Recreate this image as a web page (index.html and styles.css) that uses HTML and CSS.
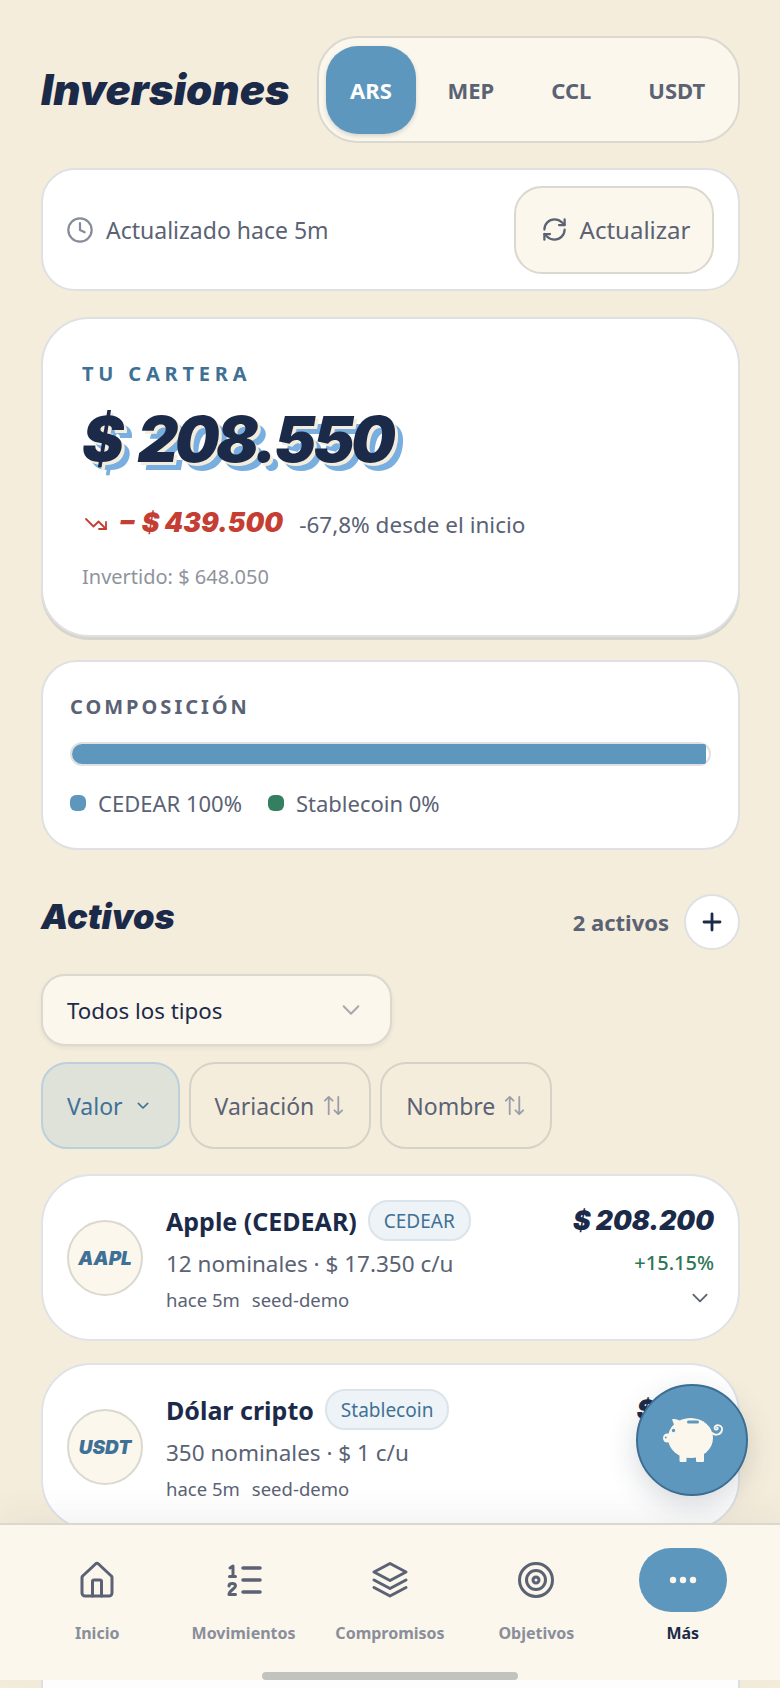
FILE: index.html
```html
<!DOCTYPE html>
<html lang="es">
<head>
<meta charset="utf-8">
<title>Inversiones</title>
<link rel="stylesheet" href="styles.css">
</head>
<body>
<div class="page">
  <main class="content">
    <header class="top">
      <h1 class="title">Inversiones</h1>
      <div class="seg">
        <button class="seg-item active">ARS</button>
        <button class="seg-item">MEP</button>
        <button class="seg-item">CCL</button>
        <button class="seg-item">USDT</button>
      </div>
    </header>

    <section class="card status">
      <div class="updated">
        <svg class="ic-clock" viewBox="0 0 24 24"><circle cx="12" cy="12" r="10"/><path d="M12 6v6l4 2"/></svg>
        <span>Actualizado hace 5m</span>
      </div>
      <button class="refresh">
        <svg class="ic-refresh" viewBox="0 0 24 24"><path d="M3 12a9 9 0 0 1 9-9 9.75 9.75 0 0 1 6.74 2.74L21 8"/><path d="M21 3v5h-5"/><path d="M21 12a9 9 0 0 1-9 9 9.75 9.75 0 0 1-6.74-2.74L3 16"/><path d="M8 16H3v5"/></svg>
        <span>Actualizar</span>
      </button>
    </section>

    <section class="card hero">
      <div class="eyebrow">TU CARTERA</div>
      <div class="amount">$ 208.550</div>
      <div class="change">
        <svg class="ic-down" viewBox="0 0 24 24"><path d="M22 19l-7.5-7.5-5 5L2 9"/><path d="M22 12v7h-7"/></svg>
        <span class="loss">− $ 439.500</span>
        <span class="pct">-67,8% desde el inicio</span>
      </div>
      <div class="invested">Invertido: $ 648.050</div>
    </section>

    <section class="card comp">
      <div class="comp-title">COMPOSICIÓN</div>
      <div class="bar"><div class="bar-fill"></div></div>
      <div class="legend">
        <span class="leg"><i class="dot blue"></i>CEDEAR 100%</span>
        <span class="leg"><i class="dot green"></i>Stablecoin 0%</span>
      </div>
    </section>

    <div class="assets-head">
      <h2 class="subtitle">Activos</h2>
      <div class="assets-right">
        <span class="count">2 activos</span>
        <button class="plus"><svg viewBox="0 0 24 24"><path d="M12 4v16M4 12h16"/></svg></button>
      </div>
    </div>

    <div class="select">
      <span>Todos los tipos</span>
      <svg class="ic-chev" viewBox="0 0 24 24"><path d="M4 8l8 8 8-8"/></svg>
    </div>

    <div class="sorts">
      <button class="sort on">Valor <svg class="ic-small" viewBox="0 0 24 24"><path d="M5 8l7 7 7-7"/></svg></button>
      <button class="sort">Variación <svg class="ic-updown" viewBox="0 0 24 24"><path d="M7 21V3M3 7l4-4 4 4"/><path d="M17 3v18M13 17l4 4 4-4"/></svg></button>
      <button class="sort">Nombre <svg class="ic-updown" viewBox="0 0 24 24"><path d="M7 21V3M3 7l4-4 4 4"/><path d="M17 3v18M13 17l4 4 4-4"/></svg></button>
    </div>

    <article class="card asset">
      <div class="avatar">AAPL</div>
      <div class="info">
        <div class="name-row"><span class="name">Apple (CEDEAR)</span><span class="chip">CEDEAR</span></div>
        <div class="sub">12 nominales · $ 17.350 c/u</div>
        <div class="meta"><span>hace 5m</span><span>seed-demo</span></div>
      </div>
      <div class="nums">
        <div class="value">$ 208.200</div>
        <div class="gain">+15.15%</div>
        <svg class="ic-expand" viewBox="0 0 24 24"><path d="M4 8l8 8 8-8"/></svg>
      </div>
    </article>

    <article class="card asset">
      <div class="avatar">USDT</div>
      <div class="info">
        <div class="name-row"><span class="name">Dólar cripto</span><span class="chip">Stablecoin</span></div>
        <div class="sub">350 nominales · $ 1 c/u</div>
        <div class="meta"><span>hace 5m</span><span>seed-demo</span></div>
      </div>
      <div class="nums">
        <div class="value">$ 350</div>
        <div class="gain">+0.00%</div>
        <svg class="ic-expand" viewBox="0 0 24 24"><path d="M4 8l8 8 8-8"/></svg>
      </div>
    </article>

    <section class="card tail"></section>
  </main>

  <button class="fab" aria-label="Ahorro">
    <svg viewBox="0 0 60 44">
      <ellipse class="pig" cx="27.500" cy="20" rx="22.500" ry="20"/>
      <path class="pig" d="M9 1.500c3-1 6 0 9 2L12 9z"/>
      <ellipse class="pig" cx="4.200" cy="20" rx="4.200" ry="4.500"/>
      <path class="pig" d="M7 14h8v10H7z"/>
      <rect class="pig" x="16.500" y="34" width="7" height="10" rx="1"/>
      <rect class="pig" x="33" y="34" width="8" height="10" rx="1"/>
      <rect class="slot" x="24" y="2.500" width="12" height="3" rx="1.500"/>
      <circle class="slot" cx="10.500" cy="12.500" r="1.700"/>
      <circle class="slot" cx="2.800" cy="19.500" r=".9"/>
      <path class="tailc" d="M49 15c3 3 9 2 10-3 .8-4-4-6-6.500-4-2 1.700-.5 4.500 1.500 3.500 1-.5 1-2 0-2"/>
    </svg>
  </button>

  <nav class="nav">
    <a class="tab">
      <span class="tab-ic"><svg viewBox="0 0 40 40"><path d="M5 33V17.500a2 2 0 0 1 .7-1.500L18.500 4a2.200 2.200 0 0 1 3 0L34.300 16a2 2 0 0 1 .7 1.500V33a3 3 0 0 1-3 3H8a3 3 0 0 1-3-3z"/><path d="M15.500 36V21.500a1.500 1.500 0 0 1 1.500-1.500h6a1.500 1.500 0 0 1 1.500 1.500V36"/></svg></span>
      <span class="tab-label">Inicio</span>
    </a>
    <a class="tab">
      <span class="tab-ic"><svg viewBox="0 0 40 40"><path class="thick" d="M19 8h17M19 20h17M19 32h17"/><path class="thin" d="M6 8l3-2v10M5.500 16.500h6M5 26c0-3.500 6.500-3.500 6.500 0 0 2.500-6.500 4.500-6.500 8.500h6.500"/></svg></span>
      <span class="tab-label">Movimientos</span>
    </a>
    <a class="tab">
      <span class="tab-ic"><svg viewBox="0 0 40 40"><path d="M20 3.500L36 12l-16 8.500L4 12z"/><path d="M4 20l16 8.500L36 20"/><path d="M4 27.500L20 36l16-8.500"/></svg></span>
      <span class="tab-label">Compromisos</span>
    </a>
    <a class="tab">
      <span class="tab-ic"><svg viewBox="0 0 40 40"><circle cx="20" cy="20" r="16.500"/><circle cx="20" cy="20" r="9.500"/><circle cx="20" cy="20" r="3"/></svg></span>
      <span class="tab-label">Objetivos</span>
    </a>
    <a class="tab current">
      <span class="tab-pill"><svg viewBox="0 0 32 8"><circle cx="6" cy="4" r="3.200"/><circle cx="16" cy="4" r="3.200"/><circle cx="26" cy="4" r="3.200"/></svg></span>
      <span class="tab-label">Más</span>
    </a>
    <span class="home-bar"></span>
  </nav>
</div>
</body>
</html>
```

FILE: styles.css
```css
* { box-sizing: border-box; }
html, body { margin: 0; padding: 0; }
body {
  width: 780px;
  height: 1688px;
  overflow: hidden;
  background: #f5eddc;
  font-family: "Noto Sans", "Liberation Sans", sans-serif;
  color: #1c2a4a;
}
button { font: inherit; color: inherit; cursor: pointer; }
svg { display: block; fill: none; stroke: currentColor; stroke-linecap: round; stroke-linejoin: round; }

.page { position: relative; width: 780px; height: 1688px; overflow: hidden; }
.content { padding: 36px 40px 0 41px; display: flex; flex-direction: column; }

.top { display: flex; align-items: center; justify-content: space-between; height: 107px; }
.title { margin: 0; font-family: Inter, sans-serif; font-weight: 900; font-style: italic; font-size: 42px; color: #1c2a4a; }
.seg {
  width: 423px; height: 107px; display: flex; align-items: center;
  background: #fbf7ec; border: 2px solid #dbd8cf; border-radius: 40px; padding: 0 0 0 7px;
}
.seg-item { border: 0; background: none; height: 88px; font-size: 22px; font-weight: 700; color: #5a6274; padding: 0 28.5px; }
.seg-item.active { width: 90px; padding: 0; margin-right: 3px; border-radius: 32px; background: #5e97bd; color: #fff; box-shadow: 0 2px 4px rgba(40,50,70,.18); }

.card { background: #fff; border: 2px solid #dfe0e2; }

.status {
  margin-top: 25px; height: 123px; border-radius: 34px; display: flex; align-items: center; justify-content: space-between;
  padding: 0 24px 0 23px;
}
.updated { display: flex; align-items: center; gap: 12px; font-size: 23px; color: #5a6274; }
.ic-clock { width: 28px; height: 28px; color: #878c99; stroke-width: 1.9; }
.refresh {
  width: 200px; height: 88px; border-radius: 28px; background: #fbf7ec; border: 2px solid #dbd8cf; padding: 0 0 0 3px;
  display: flex; align-items: center; justify-content: center; gap: 12px; font-size: 24px; color: #5a6274;
}
.ic-refresh { width: 27px; height: 27px; stroke-width: 2; }

.hero {
  margin-top: 26px; height: 320px; border-radius: 48px; padding: 43px 39px 0;
  box-shadow: 0 3px 0 #d6d4cb;
}
.eyebrow { font-size: 20px; font-weight: 700; letter-spacing: 4.8px; color: #3f7196; line-height: 24px; }
.amount {
  margin-top: 14px; font-family: Inter, sans-serif; font-weight: 900; font-style: italic; font-size: 63px; line-height: 78px;
  letter-spacing: -3.500px; word-spacing: 8px; color: #1c2a4a;
  text-shadow: 3px 3px 0 #f5eddc, 8px 8px 0 #78aee0;
}
.change { margin-top: 26px; display: flex; align-items: center; height: 36px; }
.ic-down { width: 28px; height: 24px; color: #c53e33; stroke-width: 1.8; }
.loss { margin-left: 8px; font-family: Inter, sans-serif; font-weight: 900; font-style: italic; font-size: 26.500px; color: #c53e33; }
.pct { margin-left: 16px; font-size: 22.500px; color: #5a6274; position: relative; top: 2px; }
.invested { margin-top: 23px; font-size: 20px; color: #8f939c; line-height: 28px; }

.comp { margin-top: 23px; height: 190px; border-radius: 36px; padding: 32px 27px 0; }
.comp-title { font-size: 20px; font-weight: 700; letter-spacing: 3px; color: #5a6274; line-height: 26px; }
.bar { margin-top: 22px; height: 24px; border-radius: 12px; border: 2px solid #dfe0e2; background: #fff; padding-right: 3px; }
.bar-fill { height: 100%; border-radius: 10px 2px 2px 10px; background: #5e97bd; }
.legend { margin-top: 23px; display: flex; gap: 26px; font-size: 22px; color: #5a6274; line-height: 28px; }
.leg { display: flex; align-items: center; gap: 12px; }
.dot { width: 16px; height: 16px; border-radius: 6px; display: block; }
.dot.blue { background: #5e97bd; }
.dot.green { background: #347f60; }

.assets-head { margin-top: 44px; height: 56px; display: flex; align-items: center; justify-content: space-between; }
.subtitle { margin: 0; font-family: Inter, sans-serif; font-weight: 900; font-style: italic; font-size: 34.500px; color: #1c2a4a; position: relative; top: -6px; }
.assets-right { display: flex; align-items: center; gap: 15px; }
.count { font-size: 22px; font-weight: 700; color: #5a6274; }
.plus { width: 56px; height: 56px; border-radius: 50%; background: #fff; border: 2px solid #dfe0e2; padding: 0; display: flex; align-items: center; justify-content: center; }
.plus svg { width: 24px; height: 24px; stroke-width: 2.800; color: #1c2a4a; }

.select {
  margin-top: 24px; width: 351px; height: 72px; border-radius: 24px; background: #fbf7ec; border: 2px solid #dbd8cf;
  box-shadow: 0 2px 4px rgba(60,60,50,.08);
  display: flex; align-items: center; justify-content: space-between; padding: 0 28px 0 24px; font-size: 22.300px; color: #1c2a4a;
}
.ic-chev { width: 22px; height: 22px; color: #a8a9ac; stroke-width: 2.2; }

.sorts { margin-top: 16px; display: flex; gap: 9px; }
.sort {
  height: 87px; padding: 0 24px; border-radius: 26px; background: #f5eddc; border: 2px solid #d5d2c8;
  display: flex; align-items: center; gap: 8px; font-size: 23px; color: #5a6274;
}
.sort.on { background: #dfe2d9; border-color: #bcd0db; color: #3f7196; padding-right: 28px; }
.ic-small { width: 16px; height: 16px; stroke-width: 2.4; margin-left: 4px; margin-right: -1px; }
.ic-updown { width: 23px; height: 23px; color: #9b9ea8; stroke-width: 1.9; }

.asset {
  margin-top: 22px; height: 167px; border-radius: 50px; border-color: #dfe2e6; display: flex; align-items: flex-start; padding: 24px 24px 0 24px;
}
.sorts + .asset { margin-top: 25px; }
.avatar {
  flex: none; width: 76px; height: 76px; margin-top: 20px; border-radius: 50%; background: #fbf7ec; border: 2px solid #dbd8cf;
  display: flex; align-items: center; justify-content: center;
  font-family: Inter, sans-serif; font-weight: 900; font-style: italic; font-size: 19px; color: #3f7196;
}
.info { flex: 1; margin-left: 23px; }
.name-row { display: flex; align-items: center; gap: 11px; height: 41px; }
.name { font-size: 25px; font-weight: 700; color: #1c2a4a; }
.chip { height: 41px; padding: 0 14px; display: flex; align-items: center; border-radius: 20px; background: #eef3f7; border: 2px solid #dbe4ea; font-size: 19px; color: #3f7196; }
.sub { margin-top: 8px; font-size: 22.500px; color: #5a6274; line-height: 30px; }
.meta { margin-top: 8px; display: flex; gap: 12px; font-size: 18.500px; color: #5a6274; line-height: 26px; }
.nums { display: flex; flex-direction: column; align-items: flex-end; }
.value { font-family: Inter, sans-serif; font-weight: 900; font-style: italic; font-size: 26.500px; line-height: 40px; color: #1c2a4a; }
.gain { margin-top: 10px; font-size: 20px; font-weight: 500; color: #2f7656; line-height: 26px; }
.ic-expand { margin-top: 12px; margin-right: 4px; width: 20px; height: 20px; stroke-width: 2.2; color: #5a6274; }
.tail { margin-top: 22px; height: 300px; border-radius: 48px; }

.fab {
  position: absolute; left: 636px; top: 1384px; width: 112px; height: 112px; border-radius: 50%;
  background: #5e97bd; border: 2px solid #3c6e92; padding: 0; display: flex; align-items: center; justify-content: center;
  box-shadow: 0 10px 30px rgba(40,50,70,.18);
}
.fab svg { width: 60px; height: 44px; stroke: none; margin-left: 2px; overflow: visible; }
.pig { fill: #fbf7ec; }
.slot { fill: #5e97bd; }
.tailc { stroke: #fbf7ec; stroke-width: 1.800; fill: none; }

.nav {
  position: absolute; left: 0; right: 0; top: 1523px; height: 157px; padding: 0 24px;
  background: #fbf7ec; border-top: 2px solid #d9d7ce;
  box-shadow: 0 -10px 28px rgba(90,90,80,.07);
  display: grid; grid-template-columns: repeat(5, 1fr);
}
.tab { display: flex; flex-direction: column; align-items: center; padding-top: 23px; color: #5a6274; }
.tab-ic { height: 64px; display: flex; align-items: center; justify-content: center; }
.tab-ic svg { width: 40px; height: 40px; stroke-width: 3; }
.tab-ic .thick { stroke-width: 3.500; }
.tab-ic .thin { stroke-width: 3; }
.tab-label { margin-top: 8px; font-size: 16px; font-weight: 700; color: #8a8e9b; line-height: 26px; }
.tab.current .tab-label { color: #1c2a4a; }
.tab-pill { width: 88px; height: 64px; border-radius: 32px; background: #5e97bd; display: flex; align-items: center; justify-content: center; }
.tab-pill svg { width: 32px; height: 8px; fill: #fbf7ec; stroke: none; }
.home-bar { position: absolute; left: 262px; bottom: 0; width: 256px; height: 8px; border-radius: 4px; background: #c2c2be; }
```
